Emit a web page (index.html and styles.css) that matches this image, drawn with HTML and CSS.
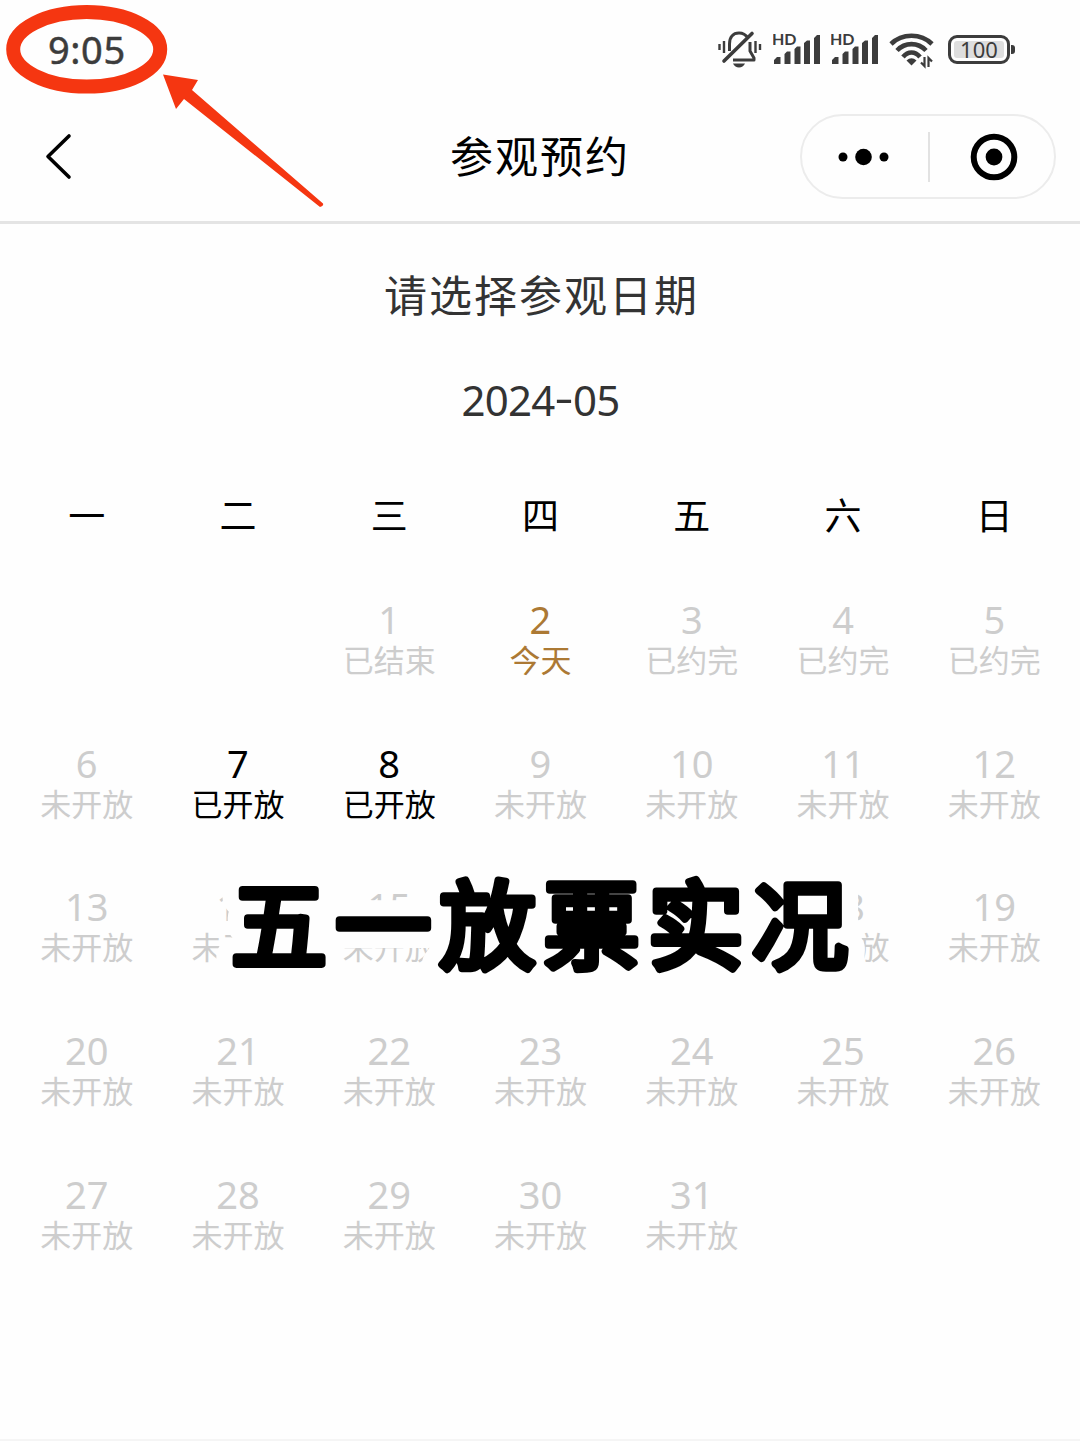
FILE: index.html
```
<!DOCTYPE html>
<html lang="zh-CN">
<head>
  <meta charset="UTF-8" />
  <meta name="viewport" content="width=device-width, initial-scale=1.0"/>
  <title>参观预约</title>
  <link rel="stylesheet" href="styles.css">
</head>
<body>

  <header>
    <div class="status-bar">
      <span class="time">9:05</span>
      <div class="status-icons">
        <svg class="icon-mute" width="44" height="40" viewBox="0 0 44 40" fill="none" stroke="#3c3c3c" stroke-width="3">
          <path d="M11.500 22V15C11.500 8 15 4 21 4C25 4 28 6 30 9M32 13V22L36 29V31H15" stroke-linejoin="round"/>
          <path d="M34 4.500L6 32" stroke-width="3.600" stroke-linecap="round"/>
          <path d="M6 12V24M1.500 15V21M37.500 12V24M42 15V21" stroke-width="2.400"/>
          <path d="M15 34.500H27Q25 38.500 21 38.500Q17 38.500 15 34.500Z" fill="#3c3c3c" stroke="none"/>
        </svg>
        <svg class="icon-signal" width="48" height="40" viewBox="0 0 48 40" fill="#3c3c3c">
          <text x="-1" y="16" class="hd">HD</text>
          <path d="M1 35V31L4 28H7.500V35ZM11.500 35V25L14 22.500H17.500V35ZM21.500 35V20L24 17.500H27.500V35ZM31 35V14L34 11.500H37V35ZM41 35V9L44 6H47V35Z"/>
        </svg>
        <svg class="icon-signal" width="48" height="40" viewBox="0 0 48 40" fill="#3c3c3c">
          <text x="-1" y="16" class="hd">HD</text>
          <path d="M1 35V31L4 28H7.500V35ZM11.500 35V25L14 22.500H17.500V35ZM21.500 35V20L24 17.500H27.500V35ZM31 35V14L34 11.500H37V35ZM41 35V9L44 6H47V35Z"/>
        </svg>
        <svg class="icon-wifi" width="46" height="40" viewBox="0 0 46 40" fill="none" stroke="#3c3c3c" stroke-width="4.600">
          <path d="M2 15C13 4 32 4 43 15M8 21.500C16 13 29 13 37 21.500M14 28C19 22 26 22 31 28"/>
          <path d="M17.500 31.500Q22.500 27 27.500 31.500L22.500 36.500Z" fill="#3c3c3c" stroke="none"/>
          <path d="M35.500 28V37L32 33.500M39.500 38V29L43 32.500" stroke-width="2.200"/>
        </svg>
        <div class="battery"><span>100</span></div>
      </div>
    </div>

    <nav>
      <svg class="back" width="30" height="48" viewBox="0 0 30 48" fill="none" stroke="#000" stroke-width="3.600" stroke-linecap="round" stroke-linejoin="round">
        <path d="M25 3L4 23.500L25 44"/>
      </svg>
      <h1>参观预约</h1>
      <div class="capsule">
        <svg width="52" height="18" viewBox="0 0 52 18">
          <circle cx="5" cy="9" r="4.500"/><circle cx="25.500" cy="9" r="8.300"/><circle cx="46" cy="9" r="4.500"/>
        </svg>
        <i class="divider"></i>
        <svg width="48" height="48" viewBox="0 0 48 48">
          <circle cx="24" cy="24" r="20.300" fill="none" stroke="#000" stroke-width="6"/>
          <circle cx="24" cy="24" r="8.400"/>
        </svg>
      </div>
    </nav>
  </header>

  <main>
    <h2>请选择参观日期</h2>
    <p class="month">2024<i>-</i>05</p>

    <div class="weekdays">
      <span>一</span><span>二</span><span>三</span><span>四</span><span>五</span><span>六</span><span>日</span>
    </div>

    <div class="days" id="days"></div>
  </main>

  <footer></footer>

  <!-- 标注 -->
  <svg class="marks" width="340" height="220" viewBox="0 0 340 220">
    <ellipse cx="86.700" cy="49.300" rx="73.500" ry="37.300" fill="none" stroke="#f53611" stroke-width="14"/>
    <path d="M163 74.500L198 80L192 90L323 203.500Q324 206 320 207L184 99L176 109Z" fill="#f53611"/>
  </svg>
  <svg class="caption" width="660" height="140" viewBox="0 0 660 140">
    <defs><text id="captionText" x="19" y="104">五一放票实况</text></defs>
    <use href="#captionText" class="caption-outline"/>
    <use href="#captionText" class="caption-fill"/>
  </svg>

  <script>
    const days = document.getElementById('days');
    const firstColumn = 3;

    // 默认都是未开放
    const status = {
      1: ['已结束', ''],
      2: ['今天', 'today'],
      3: ['已约完', ''],
      4: ['已约完', ''],
      5: ['已约完', ''],
      7: ['已开放', 'open'],
      8: ['已开放', 'open']
    };

    for (let d = 1; d <= 31; d++) {
      const [label, type] = status[d] || ['未开放', ''];
      const div = document.createElement('div');
      div.className = `day ${type}`;
      if (d === 1) div.style.gridColumnStart = firstColumn;
      div.innerHTML = `<b>${d}</b><small>${label}</small>`;
      days.appendChild(div);
    }
  </script>

</body>
</html>
```
FILE: styles.css
```
* {
  box-sizing: border-box;
}

body {
  position: relative;
  display: flex;
  flex-direction: column;
  width: 1080px;
  height: 1441px;
  margin: 0;
  overflow: hidden;
  background: #fefefe;
  color: #000;
  font-family: "Noto Sans", "Noto Sans CJK SC", sans-serif;
}

header {
  height: 224px;
  border-bottom: 3px solid #e4e4e4;
}

.status-bar {
  display: flex;
  justify-content: space-between;
  align-items: center;
  height: 98px;
  padding: 0 65px 0 48px;
  color: #3c3c3c;
}

.time {
  font-size: 38px;
  line-height: 40px;
  letter-spacing: 0.6px;
  -webkit-text-stroke: 0.5px #3c3c3c;
}

.status-icons {
  display: flex;
  align-items: center;
}

.icon-mute {
  margin-right: 11px;
}

.icon-signal {
  margin-right: 10px;
}

.icon-wifi {
  margin-right: 13px;
}

.hd {
  font-family: Lato, sans-serif;
  font-size: 16px;
  font-weight: 700;
}

.battery {
  position: relative;
  width: 62px;
  height: 29px;
  margin-right: 5px;
  padding: 3px;
  border: 3px solid #3c3c3c;
  border-radius: 9px;
}

.battery span {
  display: block;
  height: 17px;
  border-radius: 3px;
  background: #dedede;
  font-size: 22px;
  line-height: 17px;
  text-align: center;
}

.battery::after {
  content: "";
  position: absolute;
  top: 7px;
  right: -8px;
  width: 4px;
  height: 9px;
  border-radius: 0 3px 3px 0;
  background: #3c3c3c;
}

nav {
  display: grid;
  grid-template-columns: 1fr auto 1fr;
  align-items: center;
  height: 117px;
  padding: 0 24px;
}

.back {
  margin-left: 20px;
}

nav h1 {
  margin: 0;
  font-size: 43px;
  font-weight: 400;
  letter-spacing: 2px;
  line-height: 60px;
}

.capsule {
  display: flex;
  justify-self: end;
  align-items: center;
  justify-content: space-between;
  width: 256px;
  height: 85px;
  padding: 0 36px;
  border: 2px solid #ececec;
  border-radius: 43px;
}

.divider {
  width: 2px;
  height: 50px;
  margin-right: 2px;
  background: #e2e2e2;
}

main {
  flex: 1;
  padding: 42px 10px 0 11px;
}

h2 {
  height: 60px;
  margin: 0;
  padding-left: 2px;
  color: #333;
  font-size: 43px;
  font-weight: 400;
  letter-spacing: 2px;
  line-height: 60px;
  text-align: center;
}

.month {
  height: 60px;
  margin: 44px 0 0;
  color: #333;
  font-size: 42px;
  letter-spacing: -0.8px;
  line-height: 60px;
  text-align: center;
}

.month i {
  display: inline-block;
  margin: 0 3px;
  font-style: normal;
  transform: translateY(-3px) scaleX(1.4);
}

.weekdays {
  display: grid;
  grid-template-columns: repeat(7, 1fr);
  height: 50px;
  margin-top: 61px;
  font-size: 37px;
  line-height: 50px;
  text-align: center;
}

.days {
  display: grid;
  grid-template-columns: repeat(7, 1fr);
  grid-auto-rows: 143.7px;
  margin-top: 58px;
}

.day {
  display: flex;
  flex-direction: column;
  align-items: center;
  color: #cdcdcd;
}

.day b {
  font-size: 38px;
  font-weight: 400;
  line-height: 40px;
}

.day small {
  font-size: 31px;
  line-height: 43px;
}

.today {
  color: #ac7934;
}

.open {
  color: #000;
}

footer {
  height: 2px;
  background: #f5f5f5;
}

.marks {
  position: absolute;
  top: 0;
  left: 0;
}

.caption {
  position: absolute;
  top: 857px;
  left: 212px;
  font-family: "Noto Sans CJK SC", sans-serif;
  font-size: 96px;
  font-weight: 400;
  letter-spacing: 8.2px;
  stroke-linejoin: round;
  stroke-linecap: round;
}

.caption-outline {
  fill: #fefefe;
  stroke: #fefefe;
  stroke-width: 40px;
}

.caption-fill {
  fill: #000;
  stroke: #000;
  stroke-width: 7.6px;
}
```
